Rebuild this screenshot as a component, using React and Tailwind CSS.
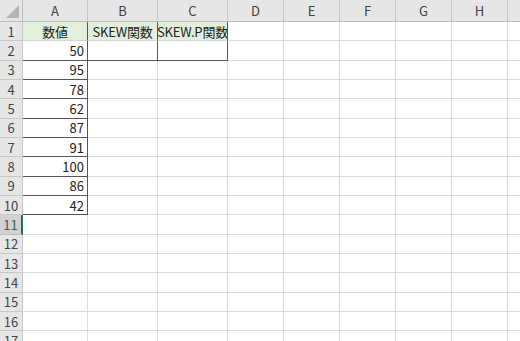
import React from "react";

const cols = [
  { name: "A", w: "w-[65px]" },
  { name: "B", w: "w-[70px]" },
  { name: "C", w: "w-[70px]" },
  { name: "D", w: "w-[56px]" },
  { name: "E", w: "w-[56px]" },
  { name: "F", w: "w-[56px]" },
  { name: "G", w: "w-[56px]" },
  { name: "H", w: "w-[56px]" },
  { name: "", w: "w-[40px]" },
];

const values = [50, 95, 78, 62, 87, 91, 100, 86, 42];

const font = { fontFamily: '"Noto Sans CJK JP", "Noto Sans", sans-serif' };

const Cell = ({ row, col }) => {
  // default gridline
  let cls = "border-r border-b border-[#dcdcdc] px-[3px]";
  let content = null;
  let align = "justify-end";

  if (row === 1 && col < 3) {
    cls = "bg-[#e2efda] border-b border-[#d4d4d4] border-r border-r-[#555] px-0 text-[12.5px] tracking-[-0.2px]";
    align = "justify-center";
    content = ["数値", "SKEW関数", "SKEW.P関数"][col];
  } else if (row === 2 && (col === 1 || col === 2)) {
    cls = "border-r border-b border-[#555]";
  } else if (col === 0 && row >= 2 && row <= 10) {
    cls = "border-r border-b border-[#555] px-[3px]";
    content = values[row - 2];
  }

  return (
    <div
      className={`${cols[col].w} shrink-0 h-full flex items-center ${align} text-[13px] text-[#222] leading-none whitespace-nowrap overflow-hidden ${cls}`}
    >
      {content}
    </div>
  );
};

export default function App() {
  const rows = Array.from({ length: 17 }, (_, i) => i + 1);

  return (
    <div className="w-[520px] h-[341px] overflow-hidden bg-white" style={font}>
      {/* column headers */}
      <div className="flex h-[22px]">
        <div className="w-[23px] shrink-0 h-full bg-[#e6e6e6] border-r border-b border-[#bdbdbd] flex items-end justify-end p-[3px]">
          <svg width="13" height="13" viewBox="0 0 13 13">
            <polygon points="13,0 13,13 0,13" fill="#b4b4b4" />
          </svg>
        </div>
        {cols.map((c, i) => (
          <div
            key={i}
            className={`${c.w} shrink-0 h-full bg-[#e6e6e6] border-r border-b border-[#c8c8c8] border-b-[#bdbdbd] flex items-center justify-center text-[13px] text-[#444]`}
          >
            {c.name}
          </div>
        ))}
      </div>

      {rows.map((r) => (
        <div key={r} className="flex h-[19.33px]">
          <div
            className={`w-[23px] shrink-0 h-full flex items-center justify-center text-[13px] leading-none border-b ${
              r === 11
                ? "bg-[#d2d2d2] text-[#3d5f4a] border-r-2 border-r-[#217346] border-b-[#bdbdbd]"
                : "bg-[#e6e6e6] text-[#444] border-r border-[#c8c8c8]"
            }`}
          >
            {r}
          </div>
          {cols.map((c, i) => (
            <Cell key={i} row={r} col={i} />
          ))}
        </div>
      ))}
    </div>
  );
}
